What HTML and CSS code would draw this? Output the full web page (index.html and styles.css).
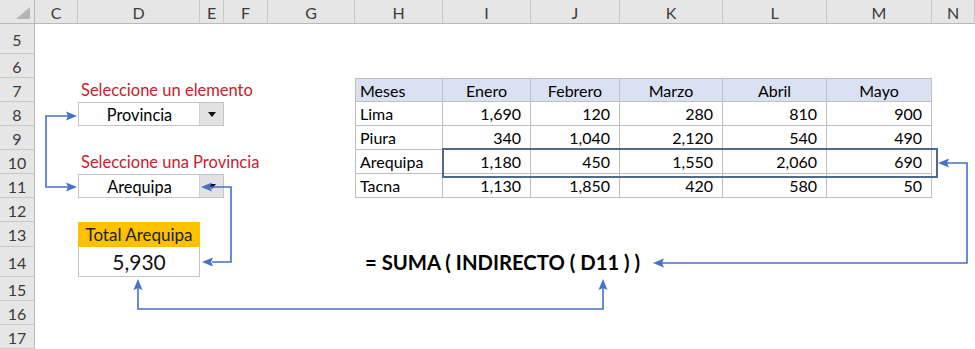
FILE: index.html
```html
<!DOCTYPE html>
<html lang="es">
<head>
<meta charset="utf-8">
<title>SUMA INDIRECTO</title>
<link rel="stylesheet" href="styles.css">
</head>
<body>
<div class="sheet">
  <div class="corner"><span class="tri"></span></div>
  <div class="colh">C</div>
  <div class="colh">D</div>
  <div class="colh">E</div>
  <div class="colh">F</div>
  <div class="colh">G</div>
  <div class="colh">H</div>
  <div class="colh">I</div>
  <div class="colh">J</div>
  <div class="colh">K</div>
  <div class="colh">L</div>
  <div class="colh">M</div>
  <div class="colh">N</div>

  <div class="label lbl1">Seleccione un elemento</div>
  <div class="dropdown dd1"><span class="dd-value">Provincia</span><span class="dd-btn"><span class="caret"></span></span></div>
  <div class="label lbl2">Seleccione una Provincia</div>
  <div class="dropdown dd2"><span class="dd-value">Arequipa</span><span class="dd-btn"><span class="caret"></span></span></div>
  <div class="total-head">Total Arequipa</div>
  <div class="total-val">5,930</div>

  <div class="data">
    <div class="c h left">Meses</div><div class="c h">Enero</div><div class="c h">Febrero</div><div class="c h">Marzo</div><div class="c h">Abril</div><div class="c h">Mayo</div>
    <div class="c left">Lima</div><div class="c num">1,690</div><div class="c num">120</div><div class="c num">280</div><div class="c num">810</div><div class="c num">900</div>
    <div class="c left">Piura</div><div class="c num">340</div><div class="c num">1,040</div><div class="c num">2,120</div><div class="c num">540</div><div class="c num">490</div>
    <div class="c left">Arequipa</div><div class="c num">1,180</div><div class="c num">450</div><div class="c num">1,550</div><div class="c num">2,060</div><div class="c num">690</div>
    <div class="c left">Tacna</div><div class="c num">1,130</div><div class="c num">1,850</div><div class="c num">420</div><div class="c num">580</div><div class="c num">50</div>
  </div>

  <div class="formula">= SUMA ( INDIRECTO ( D11 ) )</div>

  <div class="rowh">5</div>
  <div class="rowh">6</div>
  <div class="rowh">7</div>
  <div class="rowh">8</div>
  <div class="rowh">9</div>
  <div class="rowh">10</div>
  <div class="rowh">11</div>
  <div class="rowh">12</div>
  <div class="rowh">13</div>
  <div class="rowh">14</div>
  <div class="rowh">15</div>
  <div class="rowh">16</div>
  <div class="rowh">17</div>

  <div class="highlight"></div>

  <svg class="arrows" width="975" height="349" viewBox="0 0 975 349" xmlns="http://www.w3.org/2000/svg">
    <g fill="none" stroke="#4472c4" stroke-width="1.6">
      <path d="M68 116 H46 V187 H68"/>
      <path d="M211 187 H231 V262 H212"/>
      <path d="M947 163 H967 V263 H662"/>
      <path d="M138 288 V309 H603 V288"/>
    </g>
    <g fill="#4472c4">
      <polygon points="77,116 66,111.5 68,116 66,120.5"/>
      <polygon points="77,187 66,182.5 68,187 66,191.5"/>
      <polygon points="201,187 212,182.5 210,187 212,191.5"/>
      <polygon points="202,262 213,257.5 211,262 213,266.5"/>
      <polygon points="938,163 949,158.5 947,163 949,167.5"/>
      <polygon points="653,263 664,258.5 662,263 664,267.5"/>
      <polygon points="138,279 133.5,290 138,288 142.5,290"/>
      <polygon points="603,279 598.5,290 603,288 607.5,290"/>
    </g>
  </svg>
</div>
</body>
</html>
```

FILE: styles.css
```css
* {
  box-sizing: border-box;
  margin: 0;
  padding: 0;
}

body {
  margin: 0;
  background: #ffffff;
  font-family: Lato, "Liberation Sans", sans-serif;
  color: #000000;
}

.sheet {
  position: relative;
  width: 975px;
  height: 349px;
  display: grid;
  grid-template-columns: 35px 43px 122px 24px 44px 87px 88px 88px 89px 103px 104px 105px 43px;
  grid-template-rows: 24px 30px 24px 24px 24px 24px 24px 24px 24px 25px 30px 24px 24px 24px;
  overflow: hidden;
}

/* headers */
.corner {
  grid-column: 1;
  grid-row: 1;
  background: #e6e6e6;
  border-right: 1px solid #b9b9b9;
  border-bottom: 1px solid #b9b9b9;
  display: flex;
  justify-content: flex-end;
  align-items: flex-end;
  padding: 0 4px 4px 0;
}

.tri {
  width: 0;
  height: 0;
  border-left: 14px solid transparent;
  border-bottom: 12px solid #b5b5b5;
}

.colh {
  grid-row: 1;
  background: #e6e6e6;
  border-right: 1px solid #c9c9c9;
  border-bottom: 1px solid #b9b9b9;
  display: flex;
  align-items: center;
  justify-content: center;
  font-size: 16px;
  color: #3a3a3a;
  padding-top: 1px;
}

.rowh {
  grid-column: 1;
  background: #e6e6e6;
  border-right: 1px solid #b9b9b9;
  border-bottom: 1px solid #c9c9c9;
  display: flex;
  align-items: center;
  justify-content: center;
  font-size: 16px;
  color: #3a3a3a;
  padding-top: 1px;
}

/* labels */
.label {
  grid-column: 3 / span 4;
  display: flex;
  align-items: center;
  padding-left: 3px;
  font-size: 16.5px;
  color: #c8202c;
  white-space: nowrap;
}

.lbl1 { grid-row: 4; }
.lbl2 { grid-row: 7; }

/* dropdowns */
.dropdown {
  grid-column: 3 / span 2;
  display: flex;
  border: 1px solid #c4c4c4;
  background: #ffffff;
  font-size: 16.3px;
}

.dd1 { grid-row: 5; }
.dd2 { grid-row: 8; }

.dd-value {
  flex: 1;
  display: flex;
  align-items: center;
  justify-content: center;
  padding-left: 1px;
}

.dd-btn {
  width: 24px;
  background: #e2e2e2;
  border-left: 1px solid #d2d2d2;
  display: flex;
  align-items: center;
  justify-content: center;
}

.caret {
  width: 0;
  height: 0;
  border-left: 4px solid transparent;
  border-right: 4px solid transparent;
  border-top: 5px solid #111111;
}

/* total */
.total-head {
  grid-column: 3;
  grid-row: 10;
  background: #ffc000;
  display: flex;
  align-items: center;
  justify-content: center;
  font-size: 17px;
  color: #222222;
  white-space: nowrap;
}

.total-val {
  grid-column: 3;
  grid-row: 11;
  border: 1px solid #c4c4c4;
  border-top: none;
  display: flex;
  align-items: center;
  justify-content: center;
  font-size: 21px;
  color: #111111;
}

/* data table */
.data {
  grid-column: 7 / 13;
  grid-row: 4 / 9;
  display: grid;
  grid-template-columns: 87px 88px 89px 103px 104px 105px;
  grid-template-rows: 23px 24px 24px 24px 24px;
  border-left: 1px solid #bfbfbf;
  border-top: 1px solid #bfbfbf;
  font-size: 16px;
}

.c {
  border-right: 1px solid #bfbfbf;
  border-bottom: 1px solid #bfbfbf;
  display: flex;
  align-items: center;
  justify-content: flex-end;
  padding-right: 9px;
  white-space: nowrap;
}

.c.h {
  background: #d9e1f2;
  justify-content: center;
  padding-right: 0;
}

.c.left {
  justify-content: flex-start;
  padding-left: 4px;
  padding-right: 0;
}

.highlight {
  position: absolute;
  left: 442px;
  top: 148px;
  width: 496px;
  height: 30px;
  border: 2px solid #4f6a8c;
  pointer-events: none;
}

/* formula */
.formula {
  grid-column: 7 / 13;
  grid-row: 11;
  display: flex;
  align-items: center;
  padding-left: 10px;
  font-size: 20.3px;
  font-weight: 700;
  white-space: nowrap;
}

.arrows {
  position: absolute;
  left: 0;
  top: 0;
  pointer-events: none;
}
```
